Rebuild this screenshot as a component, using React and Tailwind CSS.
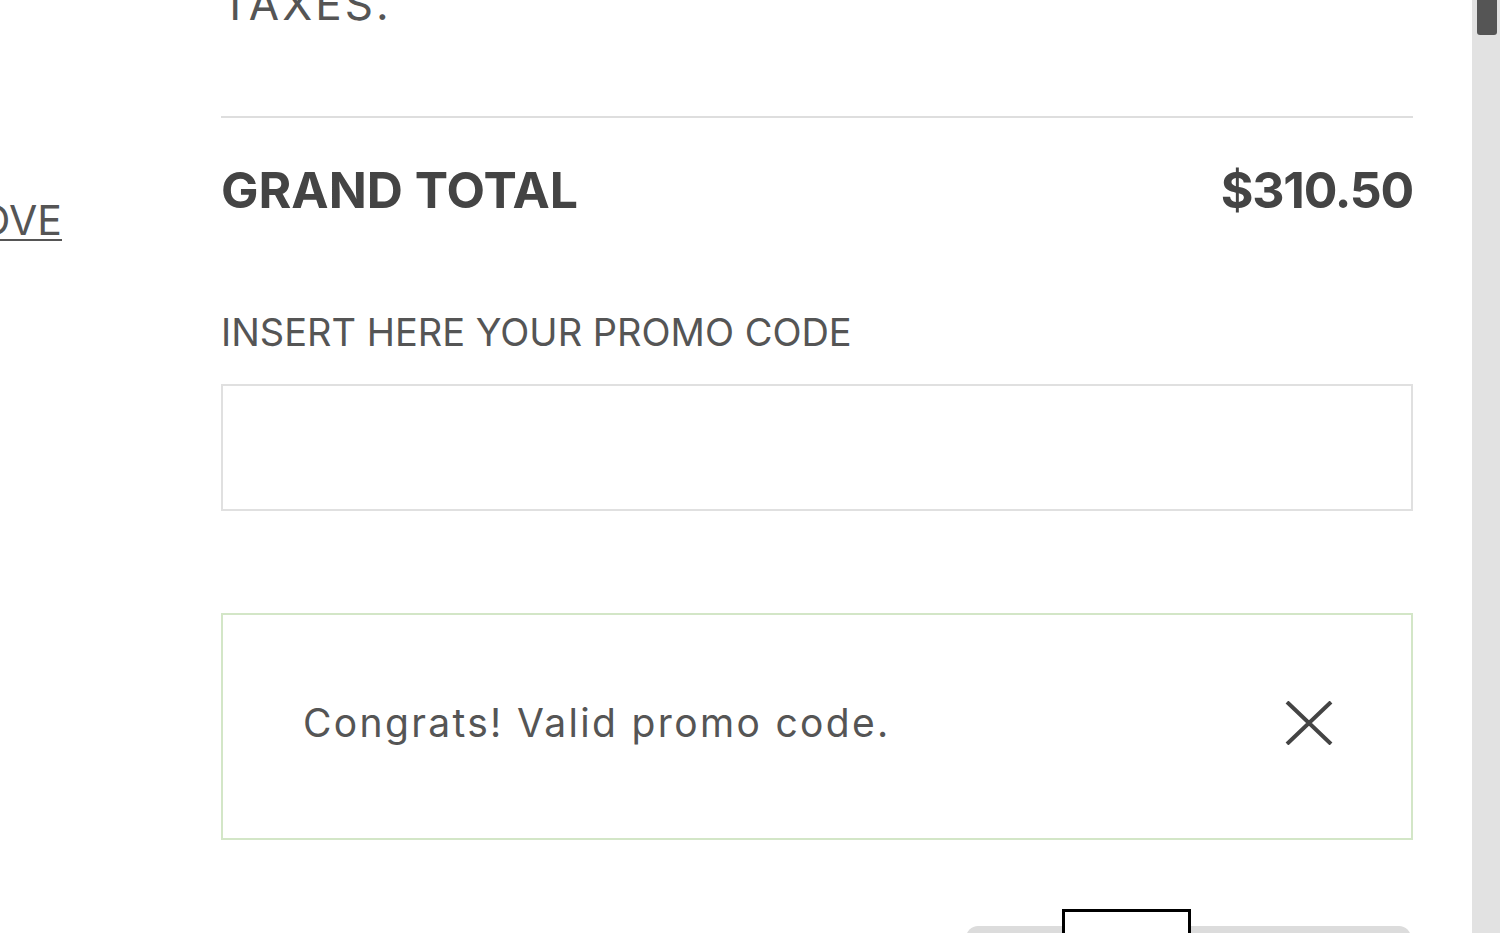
import React from "react";

function CloseIcon() {
  return (
    <svg width="48" height="44" viewBox="0 0 48 44" fill="none" stroke="#444" strokeWidth="4">
      <path d="M2 1 L46 43 M46 1 L2 43" />
    </svg>
  );
}

export default function App() {
  return (
    <div className="flex h-[933px] w-full overflow-hidden bg-white font-['Inter',sans-serif] text-[#4a4a4a]">
      <div className="flex flex-1">
        {/* left column, only the end of the remove link shows */}
        <div className="w-[221px] shrink-0">
          <div className="mt-[200px] flex w-[62px] justify-end">
            <a className="whitespace-nowrap text-[41px] leading-none text-[#555] underline decoration-2 underline-offset-[4px]">
              REMOVE
            </a>
          </div>
        </div>

        <div className="flex w-[1192px] flex-col">
          <div className="mt-[-18px] h-[44px] shrink-0 text-[44px] leading-none tracking-[0.07em] text-[#555]">TAXES.</div>
          <div className="mt-[90px] h-[2px] shrink-0 bg-[#dedede]" />

          <div className="mt-[47px] flex h-[50px] shrink-0 items-center justify-between text-[50px] font-bold leading-none text-[#444]">
            <span>GRAND TOTAL</span>
            <span className="tracking-[-0.025em]">$310.50</span>
          </div>

          <label className="mt-[98px] shrink-0 text-[38px] leading-none text-[#555]">
            INSERT HERE YOUR PROMO CODE
          </label>
          <input className="mt-[33px] h-[127px] w-full shrink-0 border-2 border-[#e0e0e0] bg-white outline-none" />

          <div className="mt-[102px] flex h-[227px] shrink-0 items-center justify-between border-2 border-[#d3e6c7] pb-[8px] pl-[80px] pr-[78px]">
            <span className="text-[39px] leading-none tracking-[0.06em] text-[#555]">Congrats! Valid promo code.</span>
            <CloseIcon />
          </div>

          <div className="mt-[86px] flex shrink-0 justify-end pr-[2px]">
            <div className="relative h-[30px] w-[445px] rounded-t-[12px] bg-[#dcdcdc]">
              <div className="absolute left-[96px] top-[-17px] h-[40px] w-[129px] border-[3px] border-black bg-white" />
            </div>
          </div>
        </div>
      </div>

      {/* scrollbar */}
      <div className="ml-[59px] w-[28px] shrink-0 bg-[#e2e2e2] pl-[5px] pr-[3px]">
        <div className="h-[35px] rounded-b-[3px] bg-[#555]" />
      </div>
    </div>
  );
}
